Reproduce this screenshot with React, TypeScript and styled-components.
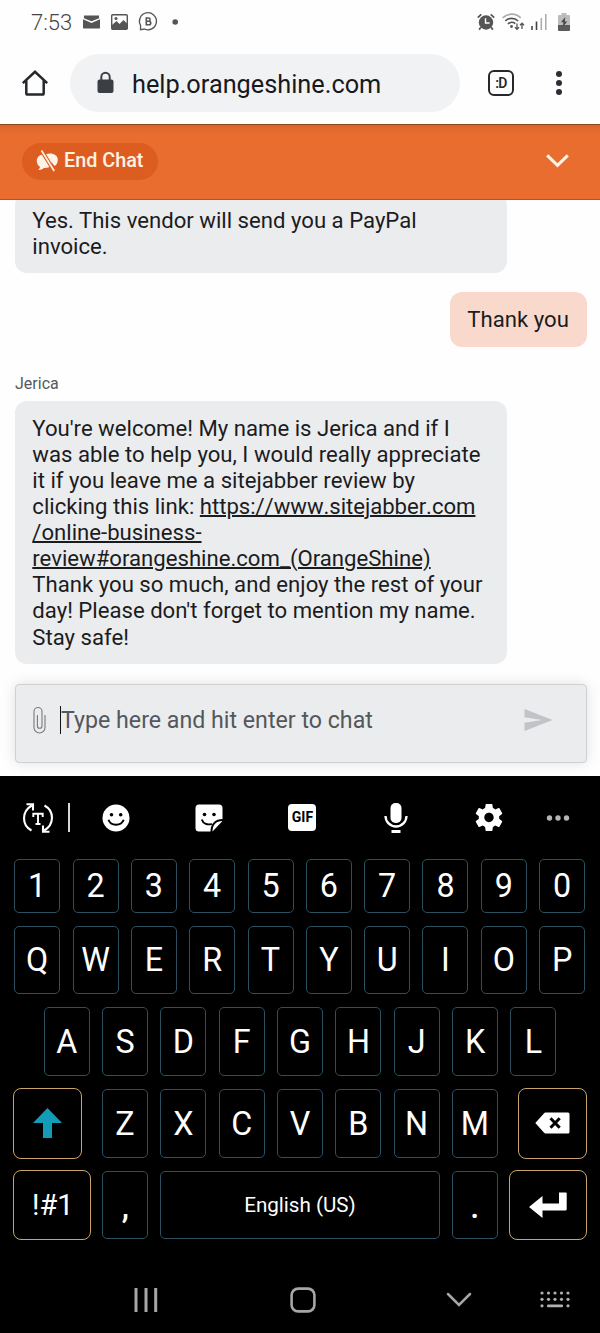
import React from "react";
import styled, { createGlobalStyle } from "styled-components";

const GlobalStyle = createGlobalStyle`
  * { box-sizing: border-box; }
  body {
    margin: 0;
    background: #fefefe;
    font-family: Roboto, "Liberation Sans", sans-serif;
  }
  svg { display: block; flex: none; overflow: visible; }
`;

const Screen = styled.div`
  width: 600px;
  height: 1333px;
  display: flex;
  flex-direction: column;
  overflow: hidden;
`;

/* ---------- Status bar ---------- */

const StatusBar = styled.div`
  height: 43px;
  padding: 0 30px 0 31px;
  display: flex;
  align-items: center;
  justify-content: space-between;
  color: #555;
`;

const StatusGroup = styled.div<{ $gap: number }>`
  display: flex;
  align-items: center;
  gap: ${(p) => p.$gap}px;
`;

const Clock = styled.span`
  font-size: 22px;
  line-height: 26px;
  width: 41px;
  margin-top: 2px;
  color: #444;
  font-weight: 300;
`;

const BatterySlot = styled.div`
  margin-left: 4.5px;
`;

/* ---------- Browser bar ---------- */

const BrowserBar = styled.div`
  height: 81px;
  padding: 11px 0 12px 22px;
  display: flex;
  align-items: center;
`;

const AddressPill = styled.div`
  width: 390px;
  height: 58px;
  margin-left: 22px;
  padding: 0 26px 0 27px;
  border-radius: 29px;
  background: #f1f2f4;
  display: flex;
  align-items: center;
  gap: 18px;
`;

const Address = styled.span`
  font-size: 25.3px;
  line-height: 30px;
  padding-top: 3px;
  color: #17191c;
`;

const TabCount = styled.div`
  width: 26px;
  height: 26px;
  margin-left: 28px;
  border: 2.6px solid #25282c;
  border-radius: 6px;
  display: flex;
  align-items: center;
  justify-content: center;
  font-size: 14px;
  line-height: 14px;
  font-weight: 600;
  letter-spacing: -0.7px;
  color: #25282c;
`;

const KebabMenu = styled.div`
  margin-left: 42px;
  display: flex;
  flex-direction: column;
  gap: 3px;
`;

const KebabDot = styled.i`
  width: 6px;
  height: 6px;
  border-radius: 50%;
  background: #2b2e33;
`;

/* ---------- Chat ---------- */

const ChatHeader = styled.div`
  height: 76px;
  flex: none;
  padding: 0 31px 2px 22px;
  display: flex;
  align-items: center;
  justify-content: space-between;
  background: linear-gradient(#d9652c 0, #e96d2f 9px, #ea6d2f 100%);
  border-top: 1px solid #8f431b;
  border-bottom: 1px solid #b9501b;
`;

const EndChat = styled.div`
  width: 136px;
  height: 37px;
  padding: 0 0 0 14px;
  border-radius: 19px;
  background: #dd5d20;
  display: flex;
  align-items: center;
  gap: 5px;
  color: #fff3e6;
  font-size: 19.8px;
  font-weight: 500;
  line-height: 24px;
  white-space: nowrap;
`;

const EndChatLabel = styled.span`
  margin-bottom: 1px;
`;

const ChatBody = styled.div`
  height: 576px;
  flex: none;
  padding: 0 13px 13.5px 15px;
  display: flex;
  flex-direction: column;
  justify-content: flex-end;
  overflow: hidden;
`;

const Bubble = styled.div<{ $mine?: boolean }>`
  width: ${(p) => (p.$mine ? "137px" : "492px")};
  align-self: ${(p) => (p.$mine ? "flex-end" : "flex-start")};
  flex: none;
  padding: 14px 17.3px ${(p) => (p.$mine ? "14.9px" : "14.4px")};
  border-radius: 12px;
  background: ${(p) => (p.$mine ? "#f9d9cc" : "#ebecee")};
  color: #1b1c1e;
  font-size: 22.15px;
  line-height: 26.1px;
  white-space: nowrap;
`;

const MineRow = styled.div`
  display: flex;
  flex-direction: column;
  margin: 19px 0 28px;
`;

const Sender = styled.div`
  font-size: 16px;
  line-height: 18px;
  color: #55595e;
  margin-bottom: 7.5px;
`;

const Link = styled.a`
  color: inherit;
  text-decoration: underline;
  text-decoration-thickness: 1.5px;
  text-decoration-skip-ink: auto;
`;

const Host = styled.span`
  font-kerning: none;
  letter-spacing: -0.04px;
`;

const Composer = styled.div`
  height: 78.5px;
  flex: none;
  width: 572px;
  margin-top: 20px;
  padding: 0 33px 6.5px 17px;
  display: flex;
  align-items: center;
  border: 1px solid #cfd0d2;
  border-radius: 4px;
  background: #ebecee;
  box-shadow: 0 0 14px rgba(0, 0, 0, 0.12);
`;

const Caret = styled.i`
  width: 1px;
  height: 28px;
  margin-left: 14px;
  background: #111;
`;

const Placeholder = styled.span`
  flex: 1;
  font-size: 23.2px;
  line-height: 28px;
  color: #54575b;
  white-space: nowrap;
`;

/* ---------- Keyboard ---------- */

const Keyboard = styled.div`
  height: 557px;
  flex: none;
  background: #000;
  display: flex;
  flex-direction: column;
`;

const Tools = styled.div`
  height: 83px;
  flex: none;
  padding-left: 23px;
  display: flex;
  align-items: center;
`;

const ToolDivider = styled.i`
  width: 2px;
  height: 29px;
  margin: 0 -0.5px 0 15px;
  background: #d8d8d8;
`;

const ToolCell = styled.div<{ $w: number }>`
  width: ${(p) => p.$w}px;
  display: flex;
  justify-content: center;
`;

const GifBadge = styled.div`
  width: 28px;
  height: 27px;
  border-radius: 4px;
  background: #fff;
  color: #000;
  font-size: 14px;
  font-weight: 700;
  line-height: 27px;
  text-align: center;
`;

const KeyRow = styled.div<{ $h: number; $mb: number; $pl: number; $gap?: number }>`
  height: ${(p) => p.$h}px;
  margin-bottom: ${(p) => p.$mb}px;
  padding-left: ${(p) => p.$pl}px;
  display: flex;
  align-items: center;
  gap: ${(p) => p.$gap ?? 12.33}px;
`;

const Key = styled.div<{ $w?: number; $size?: number }>`
  width: ${(p) => p.$w ?? 46}px;
  height: 100%;
  flex: none;
  padding-top: 1px;
  border: 1px solid #2c5060;
  border-radius: 5px;
  color: #fff;
  font-size: ${(p) => p.$size ?? 32.3}px;
  line-height: 1;
  display: flex;
  align-items: center;
  justify-content: center;
`;

const FunctionKey = styled(Key)`
  height: calc(100% + 2px);
  padding: 0;
  border-color: #c9a468;
  border-radius: 8px;
`;

const SymbolsLabel = styled.span`
  padding: 1px 0 0 2px;
`;

const Letters = styled.div`
  height: 100%;
  display: flex;
  gap: 12.33px;
`;

const PunctuationKey = styled(Key)`
  padding-top: 5px;
  font-weight: 500;
`;

const NavBar = styled.div`
  flex: 1;
  padding: 27px 0 0 68px;
  display: flex;
  align-items: center;
`;

/* ---------- Icons ---------- */

const MailIcon = () => (
  <svg width="17" height="14" viewBox="0 0 18 14" fill="#555">
    <path d="M1 0h16v3L9 6.3 1 3z" />
    <path d="M0 4.2 9 8l9-3.800V13a1 1 0 0 1-1 1H1a1 1 0 0 1-1-1z" />
  </svg>
);

const PictureIcon = () => (
  <svg width="17" height="16" viewBox="0 0 17 16">
    <rect x=".7" y=".7" width="15.600" height="14.600" rx="1" fill="none" stroke="#555" strokeWidth="1.400" />
    <path d="M1 11 5.500 7l3 3 4-4 4 4v5H1z" fill="#555" />
    <circle cx="5" cy="4.500" r="1.500" fill="#555" />
  </svg>
);

const ChatBIcon = () => (
  <svg width="19" height="19" viewBox="0 0 19 19" fill="none" stroke="#555" strokeWidth="1.300">
    <path d="M1.500 17.700 1.600 13.500A8.500 8.500 0 1 1 5.500 17z" />
    <path d="M7.300 6h2.200a1.600 1.600 0 0 1 0 3.300H7.300zM7.300 9.300h2.700a1.700 1.700 0 0 1 0 3.500H7.300z" strokeWidth="1.600" />
  </svg>
);

const StatusDot = () => (
  <svg width="10" height="6" viewBox="0 0 10 6">
    <circle cx="6.200" cy="3" r="2.800" fill="#555" />
  </svg>
);

const AlarmIcon = () => (
  <svg width="18" height="18" viewBox="0 0 19 18">
    <circle cx="9.500" cy="9.500" r="7.600" fill="#555" />
    <path d="M.8 4.500 4.500 1M18.200 4.500 14.500 1M4 14.500 2.300 17.200M15 14.500l1.700 2.700" stroke="#555" strokeWidth="1.800" />
    <path d="M9 5v5h4.300" fill="none" stroke="#fff" strokeWidth="1.500" />
  </svg>
);

const WifiIcon = () => (
  <svg width="23" height="18" viewBox="0 0 23 18" fill="none">
    <path d="M.7 4.800a13 13 0 0 1 18 0" stroke="#aaa" strokeWidth="1.700" />
    <path d="M3.300 8a9 9 0 0 1 12.800 0M6 11a5.500 5.500 0 0 1 7.300-.4" stroke="#555" strokeWidth="1.700" />
    <circle cx="9.500" cy="13.500" r="1.400" fill="#555" />
    <path d="M15 10.500v6M13 14.300l2 2 2-2M20 16v-6M18 12.200l2-2 2 2" stroke="#555" strokeWidth="1.300" />
  </svg>
);

const SignalIcon = () => (
  <svg width="16" height="17" viewBox="0 0 16 17">
    <path d="M1 17v-4M5.500 17V8.500" stroke="#444" strokeWidth="1.600" />
    <path d="M10.300 17V5M14.800 17V1" stroke="#aaa" strokeWidth="1.500" />
  </svg>
);

const BatteryIcon = () => (
  <svg width="12" height="18" viewBox="0 0 12 18">
    <path d="M3.500 0h5v2H11a1 1 0 0 1 1 1v9H0V3a1 1 0 0 1 1-1h2.500z" fill="#bcbcbc" />
    <path d="M0 12h12v5a1 1 0 0 1-1 1H1a1 1 0 0 1-1-1z" fill="#5a5a5a" />
    <path d="M7.300 4 3 9.300h2.500L4.700 14l4.600-5.500H6.700z" fill="#444" />
  </svg>
);

const HomeIcon = () => (
  <svg width="26" height="26" viewBox="0 0 26 26" fill="none" stroke="#25282c" strokeWidth="2.500">
    <path d="M.8 13.200 13 1.800l12.200 11.400" />
    <path d="M4.300 10.500v12.800a1.300 1.300 0 0 0 1.300 1.300h14.800a1.300 1.300 0 0 0 1.300-1.300V10.500" />
  </svg>
);

const LockIcon = () => (
  <svg width="17" height="22" viewBox="0 0 17 22">
    <rect x=".5" y="7.500" width="16" height="13.500" rx="2" fill="#3b3f44" />
    <path d="M4.300 8V5a4.200 4.200 0 0 1 8.400 0v3" fill="none" stroke="#3b3f44" strokeWidth="2" />
  </svg>
);

const EndChatIcon = () => (
  <svg width="23" height="22" viewBox="0 0 23 22">
    <path d="M10 4C4.500 4 .8 6.500.8 10.800c0 2.700 1.200 4.700 3.200 6-.2 1.400-1 2.500-2 3.300 2.600.1 4.600-.8 6-2 6.500.3 8-3.500 7.500-7.500z" fill="#fff3e6" />
    <path d="M9.500 4.500c5-2.600 12.500-.5 12.300 5.300 0 3-1.300 5.300-3.300 6.300z" fill="#fff3e6" />
    <path d="M5.500.5 18.200 21" stroke="#dd5d20" strokeWidth="4" />
    <path d="M5.500.5 18.200 21" stroke="#fff3e6" strokeWidth="1.700" />
  </svg>
);

const HeaderChevron = () => (
  <svg width="23" height="14" viewBox="0 0 23 14" fill="none" stroke="#fff3e6" strokeWidth="3">
    <path d="m1.200 1.400 10.300 10L21.800 1.400" />
  </svg>
);

const ClipIcon = () => (
  <svg width="13" height="28" viewBox="0 0 13 28" fill="none" stroke="#777a7e" strokeWidth="1.100">
    <path d="M12 9v12.500a5.500 5.500 0 0 1-11 0V5.500a4 4 0 0 1 8 0V20a2.300 2.300 0 0 1-4.600 0V9" />
  </svg>
);

const SendIcon = () => (
  <svg width="29" height="22" viewBox="0 0 29 22" fill="#c1c3c6">
    <path d="M.5.700a.5.500 0 0 1 .7-.5L28.500 11 1.200 21.800a.5.500 0 0 1-.7-.5v-7.600L18 11 .5 8.300z" />
  </svg>
);

const TranslateIcon = () => (
  <svg width="30" height="30" viewBox="0 0 30 30" fill="none" stroke="#fff" strokeWidth="2.100">
    <path d="M8.500 27.500C-1.500 22-1.500 8.500 8.800 2.500M3.500 1.300h6.500v6.300" />
    <path d="M21.500 2.500c10 5.500 10 19-.3 25M26.500 28.700H20v-6.300" />
    <path d="M10.300 14v-3.200h9.400V14M15 11v10.300M12.500 21h5" strokeWidth="1.900" />
  </svg>
);

const SmileIcon = () => (
  <svg width="28" height="28" viewBox="0 0 28 28">
    <circle cx="14" cy="14" r="13.500" fill="#fff" />
    <circle cx="9.500" cy="10.800" r="1.800" />
    <circle cx="18.700" cy="10.800" r="1.800" />
    <path d="M6.500 15.800c2 6.500 13 6.500 15.200 0" fill="none" stroke="#000" strokeWidth="1.900" />
  </svg>
);

const StickerIcon = () => (
  <svg width="28" height="28" viewBox="0 0 28 28">
    <path d="M4 .5h20A3.500 3.500 0 0 1 27.500 4v11c-7 0-12 4.500-12 12.500H4A3.500 3.500 0 0 1 .5 24V4A3.500 3.500 0 0 1 4 .5z" fill="#fff" />
    <path d="M17.500 27.500c0-6.500 3.500-10.500 10-10.500z" fill="#fff" />
    <circle cx="9.500" cy="10.500" r="1.800" />
    <circle cx="19" cy="10.500" r="1.800" />
    <path d="M6.800 15.500c1.300 4.500 6 5.700 10 4.300" fill="none" stroke="#000" strokeWidth="1.900" />
  </svg>
);

const MicIcon = () => (
  <svg width="24" height="30" viewBox="0 0 24 30">
    <rect x="6.500" y="0" width="11" height="20" rx="5" fill="#fff" />
    <path d="M1.500 13a10.500 10.500 0 0 0 21 0" fill="none" stroke="#fff" strokeWidth="2.300" />
    <rect x="7.500" y="27" width="9" height="3" fill="#fff" />
  </svg>
);

const GearIcon = () => (
  <svg width="34" height="35" viewBox="0 0 24 24" fill="#fff">
    <path d="M19.140 12.940c.04-.3.060-.61.060-.94 0-.32-.02-.64-.07-.94l2.030-1.580c.18-.14.230-.41.120-.61l-1.920-3.320c-.12-.22-.37-.29-.59-.22l-2.390.96c-.5-.38-1.030-.7-1.620-.94l-.36-2.540c-.04-.24-.24-.41-.48-.41h-3.840c-.24 0-.43.170-.47.410l-.36 2.540c-.59.240-1.130.570-1.620.940l-2.390-.96c-.22-.08-.47 0-.59.220L2.740 8.870c-.12.210-.08.470.120.610l2.030 1.580c-.05.300-.09.630-.09.940s.02.640.07.940l-2.030 1.580c-.18.140-.23.410-.12.610l1.920 3.320c.12.220.370.290.590.220l2.390-.96c.5.380 1.030.7 1.620.940l.36 2.540c.05.240.240.410.480.410h3.840c.24 0 .44-.17.470-.41l.36-2.540c.59-.24 1.130-.56 1.620-.94l2.390.96c.22.080.470 0 .59-.22l1.920-3.320c.12-.22.070-.47-.12-.61l-2.010-1.580zM12 15.300c-1.820 0-3.300-1.480-3.300-3.300s1.480-3.300 3.300-3.300 3.300 1.480 3.300 3.300-1.480 3.300-3.300 3.300z" />
  </svg>
);

const MoreIcon = () => (
  <svg width="24" height="6" viewBox="0 0 24 6" fill="#b5b5b5">
    <circle cx="3.500" cy="3" r="2.700" />
    <circle cx="12" cy="3" r="2.700" />
    <circle cx="20.500" cy="3" r="2.700" />
  </svg>
);

const ShiftIcon = () => (
  <svg width="29" height="30" viewBox="0 0 29 30" fill="#129cba">
    <path d="M14.500 0 29 15H19v15h-9V15H0z" />
  </svg>
);

const BackspaceIcon = () => (
  <svg width="35" height="22" viewBox="0 0 35 22">
    <path d="M10.500.5H33A1.500 1.500 0 0 1 34.500 2v18a1.500 1.500 0 0 1-1.500 1.500H10.500a2 2 0 0 1-1.400-.7L.3 11l8.800-9.800a2 2 0 0 1 1.400-.7z" fill="#fff" />
    <path d="m15.500 6.300 9.200 9.400m0-9.400-9.200 9.400" stroke="#000" strokeWidth="3" />
  </svg>
);

const EnterIcon = () => (
  <svg width="38" height="26" viewBox="0 0 38 26" fill="#fff">
    <path d="M30 .5h7a.7.7 0 0 1 .7.700V17a1.500 1.500 0 0 1-1.500 1.500H13.500V26L0 15 13.500 4v7.500H30z" />
  </svg>
);

const RecentsIcon = () => (
  <svg width="24" height="24" viewBox="0 0 24 24" stroke="#a6a6a6" strokeWidth="3">
    <path d="M2 0v24M12 0v24M21.700 0v24" />
  </svg>
);

const NavHomeIcon = () => (
  <svg width="26" height="26" viewBox="0 0 26 26" fill="none" stroke="#a6a6a6" strokeWidth="2.600">
    <rect x="1.600" y="1.600" width="22.800" height="22.800" rx="6.500" />
  </svg>
);

const NavDownIcon = () => (
  <svg width="24" height="14" viewBox="0 0 24 14" fill="none" stroke="#a6a6a6" strokeWidth="2.500">
    <path d="m1 1 11 11L23 1" strokeLinecap="round" />
  </svg>
);

const KeyboardIcon = () => (
  <svg width="30" height="17" viewBox="0 0 30 17" fill="#b0b0b0">
    {[2, 8.5, 15, 21.5, 28].map((x) => (
      <React.Fragment key={x}>
        <circle cx={x} cy="2" r="1.600" />
        <circle cx={x} cy="8.300" r="1.600" />
      </React.Fragment>
    ))}
    <circle cx="2" cy="14.800" r="1.600" />
    <circle cx="28" cy="14.800" r="1.600" />
    <rect x="7" y="13.400" width="16" height="2.800" rx="1" />
  </svg>
);

const keysOf = (letters: string) => letters.split("").map((l) => <Key key={l}>{l}</Key>);

export default function App() {
  return (
    <Screen>
      <GlobalStyle />
      <StatusBar>
        <StatusGroup $gap={11}>
          <Clock>7:53</Clock>
          <MailIcon />
          <PictureIcon />
          <ChatBIcon />
          <StatusDot />
        </StatusGroup>
        <StatusGroup $gap={6.5}>
          <AlarmIcon />
          <WifiIcon />
          <SignalIcon />
          <BatterySlot>
            <BatteryIcon />
          </BatterySlot>
        </StatusGroup>
      </StatusBar>

      <BrowserBar>
        <HomeIcon />
        <AddressPill>
          <LockIcon />
          <Address>help.orangeshine.com</Address>
        </AddressPill>
        <TabCount>:D</TabCount>
        <KebabMenu>
          <KebabDot />
          <KebabDot />
          <KebabDot />
        </KebabMenu>
      </BrowserBar>

      <ChatHeader>
        <EndChat>
          <EndChatIcon />
          <EndChatLabel>End Chat</EndChatLabel>
        </EndChat>
        <HeaderChevron />
      </ChatHeader>

      <ChatBody>
        <Bubble>
          Yes. This vendor will send you a PayPal
          <br />
          invoice.
        </Bubble>
        <MineRow>
          <Bubble $mine>Thank you</Bubble>
        </MineRow>
        <Sender>Jerica</Sender>
        <Bubble>
          You're welcome! My name is Jerica and if I
          <br />
          was able to help you, I would really appreciate
          <br />
          it if you leave me a sitejabber review by
          <br />
          clicking this link:{" "}
          <Link>
            <Host>https://www.sitejabber.com</Host>
            <br />
            /online-business-
            <br />
            review#orangeshine.com_(OrangeShine)
          </Link>
          <br />
          Thank you so much, and enjoy the rest of your
          <br />
          day! Please don't forget to mention my name.
          <br />
          Stay safe!
        </Bubble>
        <Composer>
          <ClipIcon />
          <Caret />
          <Placeholder>Type here and hit enter to chat</Placeholder>
          <SendIcon />
        </Composer>
      </ChatBody>

      <Keyboard>
        <Tools>
          <TranslateIcon />
          <ToolDivider />
          <ToolCell $w={93.2}><SmileIcon /></ToolCell>
          <ToolCell $w={93.2}><StickerIcon /></ToolCell>
          <ToolCell $w={93.2}><GifBadge>GIF</GifBadge></ToolCell>
          <ToolCell $w={93.2}><MicIcon /></ToolCell>
          <ToolCell $w={93.2}><GearIcon /></ToolCell>
          <ToolCell $w={46}><MoreIcon /></ToolCell>
        </Tools>
        <KeyRow $h={54} $mb={13} $pl={14.2}>{keysOf("1234567890")}</KeyRow>
        <KeyRow $h={68} $mb={13.4} $pl={14.2}>{keysOf("QWERTYUIOP")}</KeyRow>
        <KeyRow $h={68.5} $mb={13} $pl={43.8}>{keysOf("ASDFGHJKL")}</KeyRow>
        <KeyRow $h={69} $mb={13} $pl={13} $gap={20}>
          <FunctionKey $w={69}><ShiftIcon /></FunctionKey>
          <Letters>{keysOf("ZXCVBNM")}</Letters>
          <FunctionKey $w={69}><BackspaceIcon /></FunctionKey>
        </KeyRow>
        <KeyRow $h={68.5} $mb={0} $pl={13} $gap={11.7}>
          <FunctionKey $w={77.6} $size={28.9}>
            <SymbolsLabel>!#1</SymbolsLabel>
          </FunctionKey>
          <PunctuationKey>,</PunctuationKey>
          <Key $w={280} $size={20.6}>English (US)</Key>
          <PunctuationKey>.</PunctuationKey>
          <FunctionKey $w={77.6}><EnterIcon /></FunctionKey>
        </KeyRow>
        <NavBar>
          <ToolCell $w={156.4}><RecentsIcon /></ToolCell>
          <ToolCell $w={156.4}><NavHomeIcon /></ToolCell>
          <ToolCell $w={156.4}><NavDownIcon /></ToolCell>
          <ToolCell $w={36}><KeyboardIcon /></ToolCell>
        </NavBar>
      </Keyboard>
    </Screen>
  );
}
